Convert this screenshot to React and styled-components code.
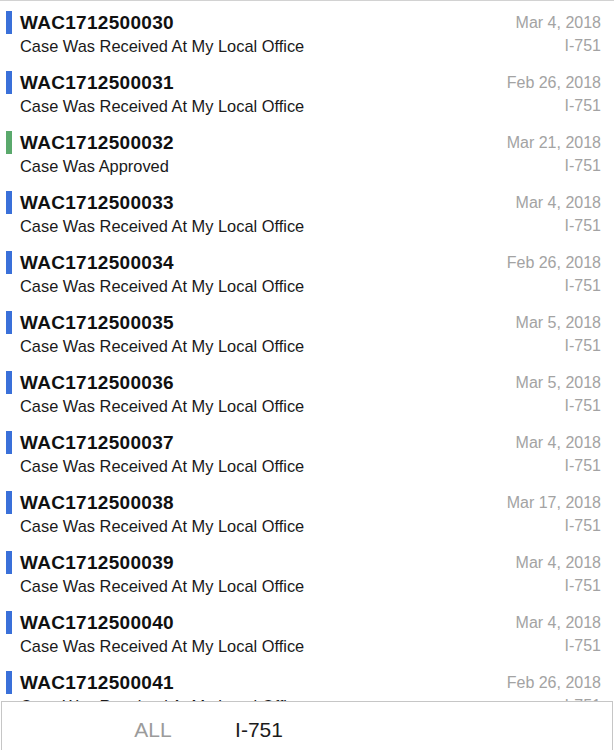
import React from 'react';
import styled, { createGlobalStyle } from 'styled-components';

const GlobalStyle = createGlobalStyle`
  html, body {
    margin: 0;
    padding: 0;
    background: #ffffff;
  }

  body {
    font-family: 'Liberation Sans', Arial, sans-serif;
    -webkit-font-smoothing: antialiased;
  }
`;

const Screen = styled.div`
  display: flex;
  flex-direction: column;
  height: 750px;
  width: 614px;
  overflow: hidden;
  border-top: 1px solid #d2d2d2;
  box-sizing: border-box;
`;

const CaseList = styled.ul`
  flex: 1;
  min-height: 0;
  overflow: hidden;
  margin: 0;
  padding: 0;
  list-style: none;
`;

const CaseRow = styled.li`
  display: flex;
  align-items: flex-start;
  height: 60px;
  box-sizing: border-box;
  padding: 10px 13px 0 6px;
`;

const StatusBar = styled.span`
  flex: none;
  width: 6px;
  height: 23px;
  margin-right: 8px;
  background: ${({ status }) => (status === 'approved' ? '#5aa96c' : '#3a70d9')};
`;

const CaseText = styled.div`
  flex: 1;
  display: flex;
  flex-direction: column;
`;

const ReceiptNumber = styled.div`
  font-size: 19px;
  line-height: 24px;
  font-weight: 700;
  color: #111;
  letter-spacing: 0.3px;
`;

const CaseStatus = styled.div`
  font-size: 16.4px;
  line-height: 22px;
  color: #1a1a1a;
`;

const CaseMeta = styled.div`
  display: flex;
  flex-direction: column;
  align-items: flex-end;
  font-size: 16px;
  color: #a3a3a3;
`;

const MetaDate = styled.div`
  line-height: 23px;
`;

const MetaForm = styled.div`
  line-height: 24px;
`;

const TabBar = styled.nav`
  flex: none;
  display: flex;
  height: 49px;
  margin: 0 1px;
  padding: 8px 0 0 98px;
  box-sizing: border-box;
  border: 1px solid #c6c6c6;
  border-bottom: none;
  background: #fff;
`;

const Tab = styled.div`
  width: 106px;
  display: flex;
  align-items: center;
  justify-content: center;
  font-size: 21px;
  color: ${({ active }) => (active ? '#1c1c1c' : '#9b9b9b')};
`;

const RECEIVED = 'Case Was Received At My Local Office';

const cases = [
  { id: 'WAC1712500030', date: 'Mar 4, 2018', status: RECEIVED },
  { id: 'WAC1712500031', date: 'Feb 26, 2018', status: RECEIVED },
  { id: 'WAC1712500032', date: 'Mar 21, 2018', status: 'Case Was Approved', approved: true },
  { id: 'WAC1712500033', date: 'Mar 4, 2018', status: RECEIVED },
  { id: 'WAC1712500034', date: 'Feb 26, 2018', status: RECEIVED },
  { id: 'WAC1712500035', date: 'Mar 5, 2018', status: RECEIVED },
  { id: 'WAC1712500036', date: 'Mar 5, 2018', status: RECEIVED },
  { id: 'WAC1712500037', date: 'Mar 4, 2018', status: RECEIVED },
  { id: 'WAC1712500038', date: 'Mar 17, 2018', status: RECEIVED },
  { id: 'WAC1712500039', date: 'Mar 4, 2018', status: RECEIVED },
  { id: 'WAC1712500040', date: 'Mar 4, 2018', status: RECEIVED },
  { id: 'WAC1712500041', date: 'Feb 26, 2018', status: RECEIVED },
];

const App = () => (
  <>
    <GlobalStyle />
    <Screen>
      <CaseList>
        {cases.map(c => (
          <CaseRow key={c.id}>
            <StatusBar status={c.approved ? 'approved' : 'received'} />
            <CaseText>
              <ReceiptNumber>{c.id}</ReceiptNumber>
              <CaseStatus>{c.status}</CaseStatus>
            </CaseText>
            <CaseMeta>
              <MetaDate>{c.date}</MetaDate>
              <MetaForm>I-751</MetaForm>
            </CaseMeta>
          </CaseRow>
        ))}
      </CaseList>
      <TabBar>
        <Tab>ALL</Tab>
        <Tab active>I-751</Tab>
      </TabBar>
    </Screen>
  </>
);

export default App;
